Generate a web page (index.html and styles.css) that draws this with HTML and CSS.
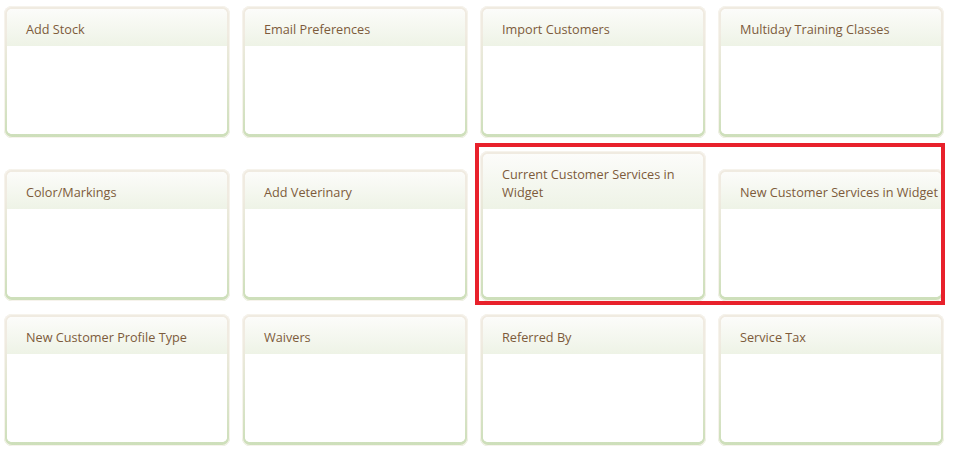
FILE: index.html
```html
<!DOCTYPE html>
<html>
<head>
<meta charset="utf-8">
<link rel="stylesheet" href="styles.css">
</head>
<body>
<div class="grid">
  <div class="card"><div class="inner"><div class="head">Add Stock</div><div class="body"></div></div></div>
  <div class="card"><div class="inner"><div class="head">Email Preferences</div><div class="body"></div></div></div>
  <div class="card"><div class="inner"><div class="head">Import Customers</div><div class="body"></div></div></div>
  <div class="card"><div class="inner"><div class="head">Multiday Training Classes</div><div class="body"></div></div></div>
  <div class="card"><div class="inner"><div class="head">Color/Markings</div><div class="body"></div></div></div>
  <div class="card"><div class="inner"><div class="head">Add Veterinary</div><div class="body"></div></div></div>
  <div class="card"><div class="inner"><div class="head">Current Customer Services in Widget</div><div class="body"></div></div></div>
  <div class="card"><div class="inner"><div class="head">New Customer Services in Widget</div><div class="body"></div></div></div>
  <div class="card"><div class="inner"><div class="head">New Customer Profile Type</div><div class="body"></div></div></div>
  <div class="card"><div class="inner"><div class="head">Waivers</div><div class="body"></div></div></div>
  <div class="card"><div class="inner"><div class="head">Referred By</div><div class="body"></div></div></div>
  <div class="card"><div class="inner"><div class="head">Service Tax</div><div class="body"></div></div></div>
</div>
<div class="highlight"></div>
</body>
</html>
```
FILE: styles.css
```css
html, body {
  margin: 0;
  padding: 0;
  background: #ffffff;
}
body {
  font-family: "Open Sans", "Noto Sans", sans-serif;
  width: 954px;
  height: 456px;
  overflow: hidden;
  position: relative;
}
.grid {
  display: flex;
  flex-wrap: wrap;
  align-items: flex-end;
  column-gap: 12px;
  row-gap: 13px;
  padding: 6px 0 0 4px;
  width: 954px;
  box-sizing: border-box;
}
.card {
  width: 226px;
  box-sizing: border-box;
  padding: 3px 3px 4px;
  border-radius: 8px;
  background: linear-gradient(#f0ebe1 20%, #cddfba);
  box-shadow: inset 0 0 0 1px #f6f3ec;
}
.inner {
  border-radius: 5px;
  overflow: hidden;
  background: #ffffff;
}
.head {
  padding: 11px 0 8px 19px;
  font-size: 12.7px;
  line-height: 18px;
  color: #7d5b3b;
  background: linear-gradient(#fcfcfa, #eef3e6);
}
.body {
  height: 88px;
  background: #ffffff;
}
.highlight {
  position: absolute;
  left: 475px;
  top: 143px;
  width: 470px;
  height: 162px;
  box-sizing: border-box;
  border: 4px solid #e8212b;
}
```
